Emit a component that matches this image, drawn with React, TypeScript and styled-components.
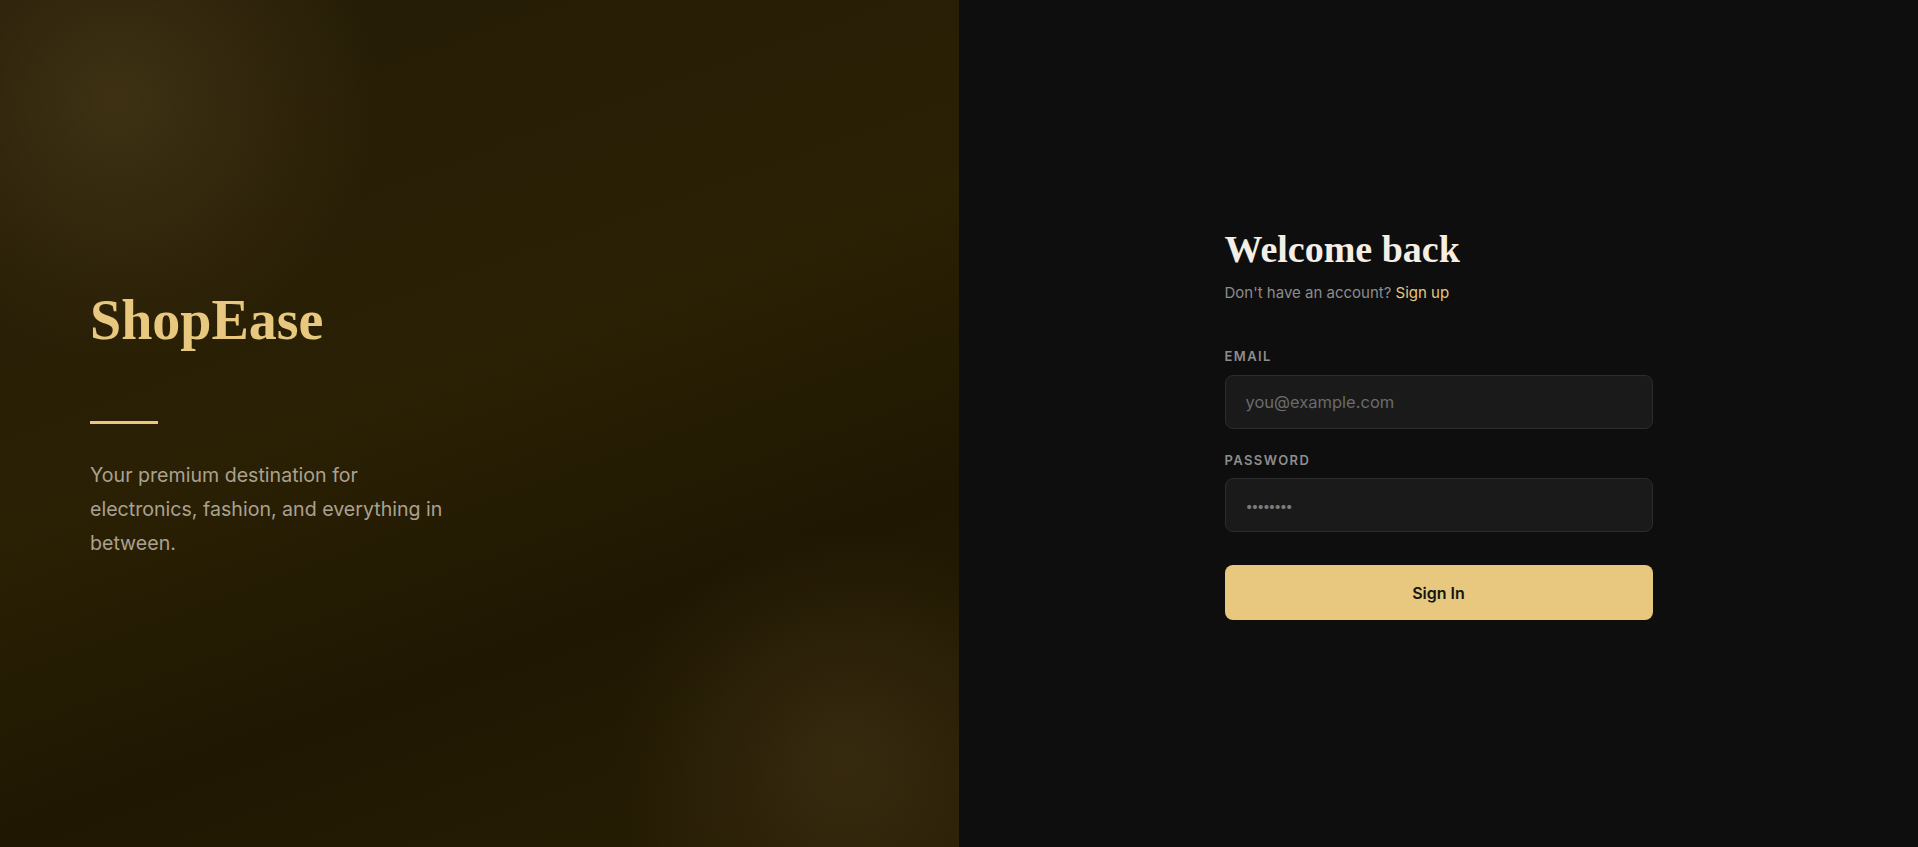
import styled, { createGlobalStyle } from "styled-components";
import { useState } from "react";

const GlobalStyle = createGlobalStyle`
  * {
    box-sizing: border-box;
  }
  html, body, #root {
    margin: 0;
    height: 100%;
  }
  body {
    font-family: "Inter", "Liberation Sans", sans-serif;
    background: #0e0e0e;
  }
`;

export default function App() {
  const [email, setEmail] = useState("");
  const [password, setPassword] = useState("");

  const handleSubmit = (e: React.FormEvent<HTMLFormElement>) => {
    e.preventDefault();
  };

  return (
    <Page>
      <GlobalStyle />
      <BrandPanel>
        <BrandContent>
          <Logo>ShopEase</Logo>
          <Rule />
          <Tagline>
            Your premium destination for electronics, fashion, and everything in
            between.
          </Tagline>
        </BrandContent>
      </BrandPanel>
      <FormPanel>
        <Form onSubmit={handleSubmit}>
          <Heading>Welcome back</Heading>
          <Subtitle>
            Don't have an account? <SignUp href="#">Sign up</SignUp>
          </Subtitle>
          <Field>
            <Label htmlFor="email">Email</Label>
            <Input
              id="email"
              type="email"
              placeholder="you@example.com"
              value={email}
              onChange={(e: React.ChangeEvent<HTMLInputElement>) => setEmail(e.target.value)}
            />
          </Field>
          <Field>
            <Label htmlFor="password">Password</Label>
            <Input
              id="password"
              type="password"
              placeholder="••••••••"
              $dots
              value={password}
              onChange={(e: React.ChangeEvent<HTMLInputElement>) => setPassword(e.target.value)}
            />
          </Field>
          <SubmitButton type="submit">Sign In</SubmitButton>
        </Form>
      </FormPanel>
    </Page>
  );
}

const Page = styled.div`
  display: grid;
  grid-template-columns: repeat(2, minmax(0, 1fr));
  width: 100%;
  height: 100vh;
  overflow: hidden;
`;

const BrandPanel = styled.section`
  display: flex;
  align-items: center;
  padding-left: 90px;
  background:
    radial-gradient(circle at 116px 100px, rgba(70, 56, 24, 0.75) 0, rgba(70, 56, 24, 0) 260px),
    radial-gradient(circle at 845px 760px, rgba(62, 48, 20, 0.7) 0, rgba(62, 48, 20, 0) 230px),
    linear-gradient(160deg, #251c07 0%, #2a2004 45%, #1f1702 70%, #281e04 100%);
`;

const BrandContent = styled.div`
  display: flex;
  flex-direction: column;
`;

const Logo = styled.h1`
  margin: 0;
  font-family: "Liberation Serif", "DejaVu Serif", serif;
  font-size: 56px;
  font-weight: 700;
  line-height: 1.2;
  color: #e8c77e;
`;

const Rule = styled.div`
  width: 68px;
  height: 3px;
  margin-top: 66px;
  background: #e8c77e;
`;

const Tagline = styled.p`
  margin: 34px 0 0;
  max-width: 380px;
  font-size: 19.6px;
  line-height: 34px;
  color: #aaa190;
`;

const FormPanel = styled.section`
  display: flex;
  align-items: center;
  justify-content: center;
  background: #0e0e0e;
`;

const Form = styled.form`
  width: 428px;
  display: flex;
  flex-direction: column;
`;

const Heading = styled.h2`
  margin: 0;
  font-family: "Liberation Serif", "DejaVu Serif", serif;
  font-size: 38px;
  font-weight: 700;
  line-height: 1.2;
  color: #f4eee4;
`;

const Subtitle = styled.p`
  margin: 10px 0 0;
  font-size: 15px;
  line-height: 1.5;
  color: #8c8c8c;
`;

const SignUp = styled.a`
  color: #e8c77e;
  text-decoration: none;
`;

const Field = styled.div`
  display: flex;
  flex-direction: column;
  gap: 10px;
  margin-top: 24px;

  &:first-of-type {
    margin-top: 44px;
  }
`;

const Label = styled.label`
  font-size: 13px;
  font-weight: 600;
  line-height: 1.2;
  letter-spacing: 1.4px;
  text-transform: uppercase;
  color: #8d8d8d;
`;

const Input = styled.input<{ $dots?: boolean }>`
  height: 54px;
  padding: 0 20px;
  background: #1a1a1a;
  border: 1px solid #2c2c2c;
  border-radius: 8px;
  font-family: inherit;
  font-size: 16.5px;
  color: #e6e6e6;
  outline: none;

  &::placeholder {
    color: ${(p) => (p.$dots ? "#7c7c7c" : "#6b6b6b")};
    letter-spacing: ${(p) => (p.$dots ? "-1.6px" : "0")};
    font-size: ${(p) => (p.$dots ? "13px" : "16.5px")};
  }
`;

const SubmitButton = styled.button`
  height: 55px;
  margin-top: 33px;
  border: none;
  border-radius: 8px;
  background: #e8c87f;
  font-family: inherit;
  font-size: 16px;
  font-weight: 600;
  color: #141414;
  cursor: pointer;
`;
